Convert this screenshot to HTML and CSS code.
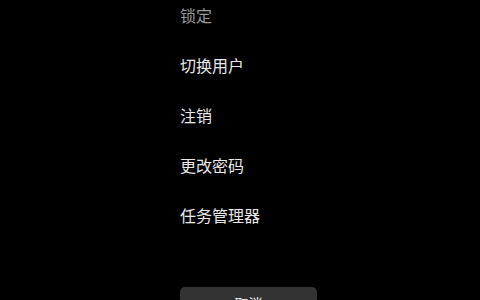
FILE: index.html
```html
<!DOCTYPE html>
<html lang="zh-CN">
<head>
  <meta charset="UTF-8" />
  <title>安全选项</title>
  <link rel="stylesheet" href="styles.css">
</head>
<body>
  <div class="screen">
    <ul class="options">
      <li class="option dim">锁定</li>
      <li class="option">切换用户</li>
      <li class="option">注销</li>
      <li class="option">更改密码</li>
      <li class="option">任务管理器</li>
    </ul>
    <button class="cancel">取消</button>
  </div>
</body>
</html>
```
FILE: styles.css
```css
html, body {
  margin: 0;
  background: #000;
  height: 100%;
  overflow: hidden;
}
.screen {
  width: 480px;
  height: 300px;
  padding-left: 180px;
  box-sizing: border-box;
  font-family: "Segoe UI", "Noto Sans CJK SC", sans-serif;
  color: #e8e8e8;
}
.options {
  list-style: none;
  margin: -10px 0 0 0;
  padding: 0;
}
.option {
  height: 50px;
  line-height: 50px;
  font-size: 16px;
}
.option.dim {
  color: #9a9a9a;
}
.cancel {
  display: block;
  margin-top: 47px;
  width: 137px;
  height: 32px;
  border: none;
  border-radius: 5px;
  background: #333;
  color: #e8e8e8;
  font-family: inherit;
  font-size: 14px;
  padding: 0;
}
```
